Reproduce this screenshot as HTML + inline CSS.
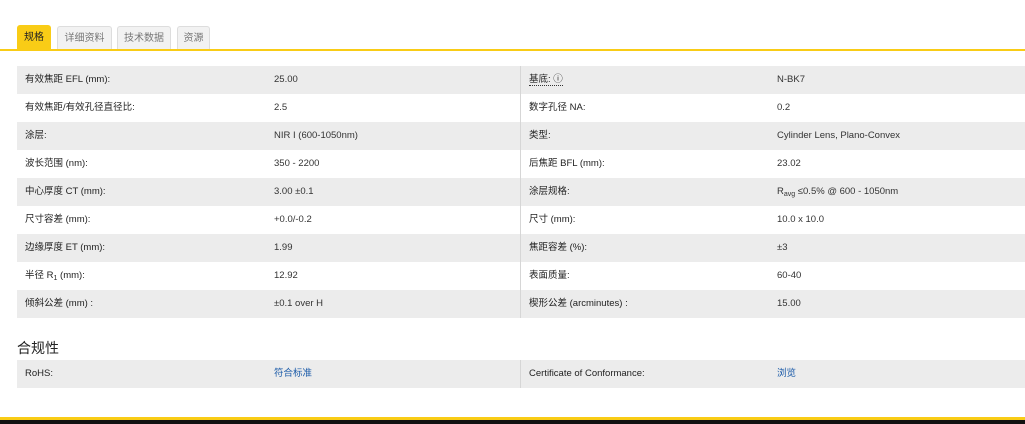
<!DOCTYPE html>
<html><head><meta charset="utf-8"><style>
*{margin:0;padding:0;box-sizing:border-box}
body{width:1025px;height:424px;background:#fff;font-family:"Liberation Sans","Noto Sans CJK SC",sans-serif;font-size:9.5px;color:#333;position:relative;overflow:hidden}
.tabs{position:absolute;left:17px;top:26px;height:24px}
.tab{position:absolute;top:0;height:24px;background:#f2f2f2;border:1px solid #ddd;border-bottom:none;border-radius:3px 3px 0 0;color:#777;font-size:10px;line-height:24px;text-align:center}
.tab.a{background:#f9cc16;border-color:#f9cc16;color:#222;top:-1px;height:25px}
.yl{position:absolute;left:0;top:49px;width:1025px;height:2px;background:#f9cc16}
.t{position:absolute;left:17px;width:1008px}
.r{height:28px;display:flex}
.r.g{background:#ececec}
.r div{line-height:28px;height:28px;padding-left:8px;white-space:nowrap;overflow:hidden}
.l{width:249px;color:#222}
.v{width:254px}
.d{border-left:1px solid #d6d6d6}
h3{position:absolute;left:17px;top:338px;font-size:14px;font-weight:normal;color:#222}
a{color:#1a5aa8;text-decoration:none}
.bot{position:absolute;left:0;top:417px;width:1025px;height:3px;background:#f9cc16}
.blk{position:absolute;left:0;top:420px;width:1025px;height:4px;background:#111}
sub{font-size:7px;vertical-align:-2px;line-height:0}
</style></head><body>
<div class="tabs">
<div class="tab a" style="left:0;width:34px">规格</div>
<div class="tab" style="left:40px;width:55px">详细资料</div>
<div class="tab" style="left:100px;width:54px">技术数据</div>
<div class="tab" style="left:160px;width:33px">资源</div>
</div>
<div class="yl"></div>
<div class="t" style="top:66px">
<div class="r g"><div class="l">有效焦距 EFL (mm):</div><div class="v">25.00</div><div class="l d"><span style="border-bottom:1px dotted #333">基底: ⓘ</span></div><div>N-BK7</div></div>
<div class="r"><div class="l">有效焦距/有效孔径直径比:</div><div class="v">2.5</div><div class="l d">数字孔径 NA:</div><div>0.2</div></div>
<div class="r g"><div class="l">涂层:</div><div class="v">NIR I (600-1050nm)</div><div class="l d">类型:</div><div>Cylinder Lens, Plano-Convex</div></div>
<div class="r"><div class="l">波长范围 (nm):</div><div class="v">350 - 2200</div><div class="l d">后焦距 BFL (mm):</div><div>23.02</div></div>
<div class="r g"><div class="l">中心厚度 CT (mm):</div><div class="v">3.00 ±0.1</div><div class="l d">涂层规格:</div><div>R<sub>avg</sub> ≤0.5% @ 600 - 1050nm</div></div>
<div class="r"><div class="l">尺寸容差 (mm):</div><div class="v">+0.0/-0.2</div><div class="l d">尺寸 (mm):</div><div>10.0 x 10.0</div></div>
<div class="r g"><div class="l">边缘厚度 ET (mm):</div><div class="v">1.99</div><div class="l d">焦距容差 (%):</div><div>±3</div></div>
<div class="r"><div class="l">半径 R<sub>1</sub> (mm):</div><div class="v">12.92</div><div class="l d">表面质量:</div><div>60-40</div></div>
<div class="r g"><div class="l">倾斜公差 (mm) :</div><div class="v">±0.1 over H</div><div class="l d">楔形公差 (arcminutes) :</div><div>15.00</div></div>
</div>
<h3>合规性</h3>
<div class="t" style="top:360px">
<div class="r g"><div class="l">RoHS:</div><div class="v"><a>符合标准</a></div><div class="l d">Certificate of Conformance:</div><div><a>浏览</a></div></div>
</div>
<div class="bot"></div><div class="blk"></div>
</body></html>
